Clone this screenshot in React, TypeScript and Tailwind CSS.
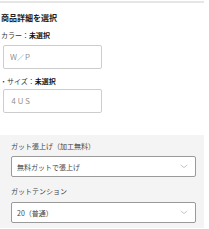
const FONT = "font-['Noto_Sans_CJK_JP','Noto_Sans',sans-serif]";

function Chevron() {
  return (
    <svg width="8" height="5" viewBox="0 0 8 5" className="shrink-0">
      <polyline points="0.8,1 4,3.6 7.2,1" fill="none" stroke="#b8b8b8" strokeWidth="0.8" />
    </svg>
  );
}

function TextBox({ value }: { value: string }) {
  return (
    <div className="ml-[3px] flex h-[24px] w-[99px] items-center rounded-[2px] border border-[#cdcdcd] bg-white pl-[6px] text-[7px] leading-[10px] text-[#8a8a8a]">
      {value}
    </div>
  );
}

function SelectBox({ value }: { value: string }) {
  return (
    <div className="flex h-[21px] w-[185px] items-center justify-between rounded-[2px] border border-[#9a9a9a] bg-white pl-[5px] pr-[7px] text-[7px] leading-[10px] text-[#444]">
      <span>{value}</span>
      <Chevron />
    </div>
  );
}

export default function App() {
  return (
    <div className={`h-[229px] w-[209px] overflow-hidden bg-white ${FONT}`}>
      <div className="h-px" />
      <div className="h-[2px] w-[204px] bg-[#e6e6e6]" />

      <div className="mt-[10px] pl-px text-[8px] font-bold leading-[10px] text-[#222]">
        商品詳細を選択
      </div>

      <div className="mt-[7px] pl-px text-[7px] leading-[10px] text-[#333]">
        カラー：<span className="font-bold text-[#111]">未選択</span>
      </div>
      <div className="mt-[5px]">
        <TextBox value="Ｗ／Ｐ" />
      </div>

      <div className="mt-[7px] text-[7px] leading-[10px] text-[#333]">
        ・サイズ：<span className="font-bold text-[#111]">未選択</span>
      </div>
      <div className="mt-[3px]">
        <TextBox value="４ＵＳ" />
      </div>

      <div className="mt-[22px] w-[204px] bg-[#f4f4f4] pb-[5px] pl-[11px] pt-[6px]">
        <div className="text-[7px] leading-[10px] text-[#444]">ガット張上げ（加工無料）</div>
        <div className="mt-[5px]">
          <SelectBox value="無料ガットで張上げ" />
        </div>
        <div className="mt-[9px] text-[7px] leading-[10px] text-[#444]">ガットテンション</div>
        <div className="mt-[6px]">
          <SelectBox value="20（普通）" />
        </div>
      </div>
    </div>
  );
}
